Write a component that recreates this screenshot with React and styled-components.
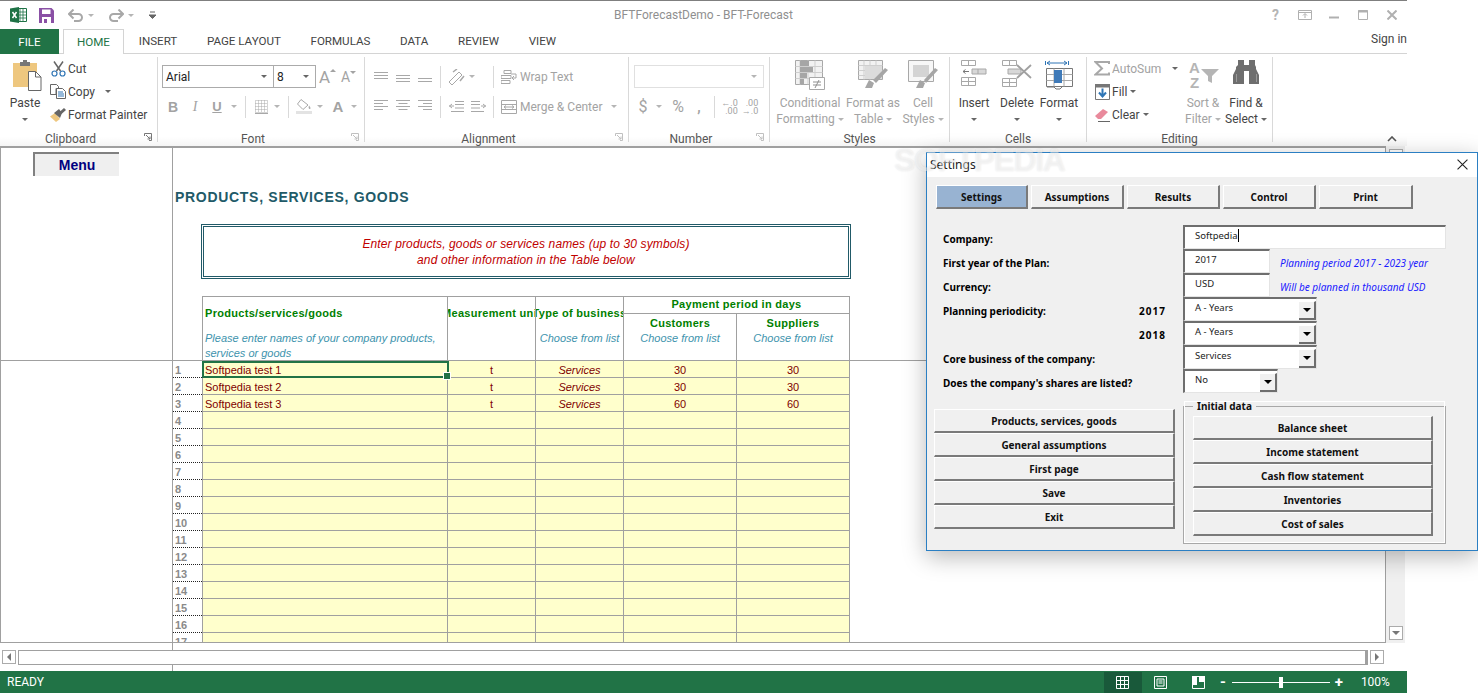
import styled, { createGlobalStyle } from "styled-components";

const GlobalStyle = createGlobalStyle`
  html, body { margin: 0; padding: 0; background: #fff; }
  * { box-sizing: border-box; }
`;

const UI = `Roboto, "Noto Sans", sans-serif`;
const ARIAL = `"Liberation Sans", Arial, sans-serif`;
const TAHOMA = `"Noto Sans", "DejaVu Sans", sans-serif`;
const LINE = "#a0a0a0";
const GREEN = "#217346";

const Page = styled.div`
  position: relative;
  width: 1478px;
  height: 693px;
  overflow: hidden;
  background: #fff;
  font-family: ${UI};
`;

const ExcelWindow = styled.div`
  width: 1407px;
  height: 693px;
  display: flex;
  flex-direction: column;
  border-top: 1px solid #7f7f7f;
`;

/* title bar */
const TitleBar = styled.div`
  height: 28px;
  flex: none;
  display: grid;
  grid-template-columns: 1fr auto 1fr;
  align-items: center;
`;
const Qat = styled.div`
  display: flex;
  align-items: center;
  padding-left: 10px;
`;
const QatSlot = styled.span`
  display: flex;
  align-items: center;
  width: ${(p) => p.$w}px;
`;
const WindowTitle = styled.div`
  font-size: 12px;
  color: #8f8f8f;
`;
const WinControls = styled.div`
  display: flex;
  justify-content: flex-end;
  align-items: center;
  padding-right: 1px;
`;
const WinBtn = styled.span`
  width: 29px;
  display: flex;
  justify-content: center;
`;

/* tabs */
const TabRow = styled.div`
  height: 25px;
  flex: none;
  display: flex;
  border-bottom: 1px solid #d4d4d4;
  font-size: 11.6px;
`;
const FileTab = styled.div`
  width: 59px;
  margin-right: 4px;
  height: 25px;
  background: ${GREEN};
  color: #fff;
  display: flex;
  align-items: center;
  justify-content: center;
`;
const Tab = styled.div`
  height: ${(p) => (p.$active ? 25 : 24)}px;
  padding: 0 ${(p) => (p.$active ? 13 : 14.8)}px;
  display: flex;
  align-items: center;
  color: ${(p) => (p.$active ? GREEN : "#444")};
  background: #fff;
  border: ${(p) => (p.$active ? "1px solid #d4d4d4" : "none")};
  border-bottom: none;
`;
const SignIn = styled.div`
  margin-left: auto;
  align-self: flex-start;
  padding-top: 3px;
  color: #444;
  font-size: 12px;
`;

/* ribbon */
const Ribbon = styled.div`
  height: 92px;
  flex: none;
  display: flex;
  padding: 3px 0 4px;
  font-size: 12px;
  color: #444;
  background: linear-gradient(#fff 90%, #f5f5f5);
`;
const Group = styled.div`
  width: ${(p) => p.$w}px;
  flex: none;
  display: flex;
  flex-direction: column;
  border-right: 1px solid #d9d9d9;
`;
const GroupBody = styled.div`
  flex: 1;
  display: flex;
  min-height: 0;
  padding-top: ${(p) => p.$top ?? 0}px;
  flex-direction: ${(p) => (p.$col ? "column" : "row")};
`;
const GroupLabel = styled.div`
  height: 15px;
  flex: none;
  margin-bottom: -4px;
  display: grid;
  grid-template-columns: 1fr auto 1fr;
  align-items: center;
  color: #555;
  font-size: 12px;
  padding-right: ${(p) => (p.$launcher ? 16 : 0)}px;
  & > span { grid-column: 2; }
  & > svg { grid-column: 3; justify-self: end; margin: -3px -11px 0 0; }
`;
const BigBtn = styled.div`
  width: ${(p) => p.$w}px;
  flex: none;
  margin-left: ${(p) => p.$ml ?? 0}px;
  display: flex;
  flex-direction: column;
  align-items: center;
  padding-top: 3px;
  line-height: 16px;
  color: ${(p) => (p.$off ? "#a3a3a3" : "#444")};
  white-space: nowrap;
`;
const BigIcon = styled.div`
  height: 35px;
  display: flex;
  align-items: flex-start;
  flex: none;
`;
const BigLine = styled.div`
  height: 16px;
  display: flex;
  align-items: center;
`;
const SmallCol = styled.div`
  display: flex;
  flex-direction: column;
  width: ${(p) => p.$w}px;
  padding-left: ${(p) => p.$pl ?? 0}px;
  flex: none;
`;
const SmallRow = styled.div`
  height: 23px;
  display: flex;
  align-items: center;
  white-space: nowrap;
  color: ${(p) => (p.$off ? "#a3a3a3" : "#444")};
`;
const SmallIcon = styled.span`
  width: 20px;
  flex: none;
  display: flex;
  justify-content: center;
`;
const Caret = styled.span`
  display: inline-block;
  width: 0;
  height: 0;
  flex: none;
  border-left: 3px solid transparent;
  border-right: 3px solid transparent;
  border-top: 3px solid ${(p) => (p.$off ? "#b5b5b5" : "#666")};
  margin-left: ${(p) => p.$ml ?? 0}px;
`;
const ToolRow = styled.div`
  height: 23px;
  display: flex;
  align-items: center;
  padding-left: ${(p) => p.$pl ?? 0}px;
  margin-bottom: 7px;
  color: #a3a3a3;
  white-space: nowrap;
`;
const Slot = styled.span`
  width: ${(p) => p.$w}px;
  flex: none;
  display: flex;
  justify-content: center;
  align-items: center;
  font: ${(p) => p.$font || "inherit"};
`;
const SizeTick = styled.span`
  align-self: flex-start;
  margin-top: 2px;
  width: 0;
  height: 0;
  border-left: 3px solid transparent;
  border-right: 3px solid transparent;
  ${(p) => (p.$up ? "border-bottom: 3px solid #a3a3a3;" : "border-top: 3px solid #a3a3a3;")}
`;
const ToolSep = styled.span`
  width: 1px;
  height: 22px;
  flex: none;
  background: #d9d9d9;
  margin: 0 ${(p) => p.$r ?? 5}px 0 ${(p) => p.$l ?? 5}px;
`;
const ToolText = styled.span`
  margin-left: 2px;
`;
const ComboBox = styled.div`
  width: ${(p) => p.$w}px;
  height: 23px;
  flex: none;
  margin-left: ${(p) => p.$ml ?? 0}px;
  display: flex;
  align-items: center;
  justify-content: space-between;
  padding: 0 6px 0 3px;
  border: 1px solid ${(p) => (p.$off ? "#e0e0e0" : "#ababab")};
  font-size: 12px;
  color: #222;
`;
const DecimalStack = styled.span`
  display: flex;
  flex-direction: column;
  font-size: 9px;
  line-height: 8px;
  text-align: right;
`;
const Collapse = styled.svg`
  align-self: flex-end;
  margin: 0 10px 0 auto;
`;

/* sheet */
const SheetRow = styled.div`
  flex: 1;
  display: flex;
  min-height: 0;
`;
const Sheet = styled.div`
  width: 1386px;
  flex: none;
  display: flex;
  flex-direction: column;
  border: 1px solid ${LINE};
  border-top-width: 2px;
  overflow: hidden;
`;
const TopPane = styled.div`
  height: 213px;
  flex: none;
  display: flex;
  border-bottom: 1px solid ${LINE};
`;
const BottomPane = styled.div`
  flex: 1;
  display: flex;
  min-height: 0;
  overflow: hidden;
`;
const SideCol = styled.div`
  width: 172px;
  flex: none;
  border-right: 1px solid ${LINE};
`;
const MenuButton = styled.div`
  width: 86px;
  height: 24px;
  margin: 4px 0 0 32px;
  background: #efefef;
  border-top: 2px solid #808080;
  border-left: 2px solid #808080;
  color: #000080;
  font: bold 14px ${ARIAL};
  display: flex;
  align-items: center;
  justify-content: center;
`;
const TopMain = styled.div`
  flex: 1;
  font-family: ${ARIAL};
  padding-top: 41px;
`;
const SheetTitle = styled.h1`
  margin: 0 0 0 2px;
  font: bold 14px/16px ${ARIAL};
  letter-spacing: 0.7px;
  color: #215a68;
`;
const NoteBox = styled.div`
  width: 650px;
  height: 55px;
  margin: 19px 0 17px 28px;
  border: 3px double #215a68;
  color: #c00000;
  font: italic 12px/16px ${ARIAL};
  letter-spacing: 0.12px;
  text-align: center;
  padding-top: 9px;
`;
const HeadGrid = styled.div`
  width: 648px;
  margin-left: 29px;
  height: 64px;
  display: grid;
  grid-template-columns: 245px 88px 88px 113px 113px;
  grid-template-rows: 17px 47px;
  border-top: 1px solid ${LINE};
  border-left: 1px solid ${LINE};
`;
const HeadCell = styled.div`
  grid-column: ${(p) => p.$col};
  grid-row: ${(p) => p.$row};
  border-right: 1px solid ${LINE};
  border-bottom: ${(p) => (p.$line ? `1px solid ${LINE}` : "none")};
  overflow: hidden;
  display: flex;
  flex-direction: column;
  align-items: ${(p) => (p.$left ? "flex-start" : "center")};
  padding-left: ${(p) => (p.$left ? 2 : 0)}px;
  padding-top: ${(p) => p.$top ?? 0}px;
`;
const HeadTitle = styled.div`
  flex: none;
  white-space: nowrap;
  font: bold 11px/14px ${ARIAL};
  letter-spacing: 0.3px;
  color: #008000;
`;
const HeadHint = styled.div`
  flex: none;
  white-space: nowrap;
  font: italic 11px/15px ${ARIAL};
  color: #3d93ad;
  margin-top: ${(p) => p.$mt ?? 0}px;
`;
const RowsGrid = styled.div`
  flex: none;
  display: grid;
  grid-template-columns: 29px 246px 88px 88px 113px 113px;
  grid-auto-rows: 17px;
  font: 11px/16px ${ARIAL};
  color: #800000;
`;
const RowNum = styled.div`
  font-weight: bold;
  color: #8a8a8a;
  padding: 1px 0 0 2px;
  border-bottom: 1px dotted #222;
`;
const Cell = styled.div`
  position: relative;
  background: #ffffcc;
  border-right: 1px solid ${LINE};
  border-bottom: 1px solid ${LINE};
  border-left: ${(p) => (p.$first ? `1px solid ${LINE}` : "none")};
  text-align: ${(p) => (p.$first ? "left" : "center")};
  font-style: ${(p) => (p.$italic ? "italic" : "normal")};
  padding: 1px 0 0 ${(p) => (p.$first ? 2 : 0)}px;
`;
const Selection = styled.span`
  position: absolute;
  z-index: 2;
  inset: 0 -2px -1px -1px;
  border: 2px solid ${GREEN};
  &::after {
    content: "";
    position: absolute;
    right: -4px;
    bottom: -4px;
    width: 6px;
    height: 6px;
    background: ${GREEN};
    border: 1px solid #fff;
  }
`;
const VScroll = styled.div`
  width: 19px;
  flex: none;
  background: #f0f0f0;
  display: flex;
  flex-direction: column;
  justify-content: space-between;
  align-items: center;
  padding: 3px 0 3px;
`;
const ScrollBtn = styled.div`
  width: 14px;
  height: 14px;
  background: #fff;
  border: 1px solid #ababab;
  display: flex;
  align-items: center;
  justify-content: center;
`;
const Tri = styled.span`
  width: 0;
  height: 0;
  border: 4px solid transparent;
  ${(p) => p.$dir === "down" && "border-top: 4px solid #777; border-bottom: 0;"}
  ${(p) => p.$dir === "up" && "border-bottom: 4px solid #777; border-top: 0;"}
  ${(p) => p.$dir === "left" && "border-right: 4px solid #777; border-left: 0;"}
  ${(p) => p.$dir === "right" && "border-left: 4px solid #777; border-right: 0;"}
`;
const HScrollRow = styled.div`
  height: 28px;
  flex: none;
  display: flex;
  align-items: center;
  gap: 2px;
  padding: 0 23px 0 2px;
  background: linear-gradient(${LINE}, ${LINE}) 172px 0 / 1px 100% no-repeat;
`;
const HTrack = styled.div`
  flex: 1;
  height: 15px;
  background: #fff;
  border: 1px solid ${LINE};
  border-right-width: 3px;
`;

/* status bar */
const StatusBar = styled.div`
  height: 22px;
  flex: none;
  background: ${GREEN};
  color: #fff;
  display: flex;
  align-items: center;
  font-size: 12px;
  padding-left: 7px;
`;
const ViewBtn = styled.div`
  width: 38px;
  height: 21px;
  margin-top: 1px;
  display: flex;
  align-items: center;
  justify-content: center;
  margin-left: ${(p) => p.$ml ?? 0}px;
  background: ${(p) => (p.$active ? "#19593a" : "transparent")};
`;
const ZoomSlider = styled.div`
  width: 98px;
  height: 1px;
  margin: 0 2px;
  background: #fff;
  display: flex;
  justify-content: center;
  align-items: center;
  &::after {
    content: "";
    width: 4px;
    height: 11px;
    background: #fff;
  }
`;
const ZoomSign = styled.span`
  width: 14px;
  text-align: center;
  font-size: 15px;
  font-weight: 700;
  line-height: 15px;
  margin-left: ${(p) => p.$ml ?? 0}px;
`;
const ZoomValue = styled.span`
  margin-left: 15px;
`;

/* settings dialog */
const Dialog = styled.div`
  position: absolute;
  left: 926px;
  top: 152px;
  width: 552px;
  height: 399px;
  background: #f0f0f0;
  border: 1px solid #2b7fc3;
  box-shadow: 0 6px 22px rgba(0, 0, 0, 0.28);
  font-family: ${TAHOMA};
  color: #000;
`;
const DialogTitle = styled.div`
  height: 24px;
  background: #fff;
  display: flex;
  align-items: center;
  justify-content: space-between;
  padding: 0 9px 2px 3px;
  font-size: 12px;
  color: #222;
`;
const DialogBody = styled.div`
  padding: 8px 0 0 7px;
`;
const DialogTabs = styled.div`
  display: flex;
  gap: 3px;
  margin-left: 2px;
`;
const Raised = styled.div`
  height: 24px;
  width: ${(p) => p.$w ?? "auto"};
  flex: none;
  background: ${(p) => (p.$active ? "#98b3d2" : "#f0f0f0")};
  border-top: 1px solid #fff;
  border-left: 1px solid #fff;
  border-right: 2px solid #7a7a7a;
  border-bottom: 2px solid #7a7a7a;
  display: flex;
  align-items: center;
  justify-content: center;
  font-size: 10px;
  font-weight: 700;
  color: #111;
`;
const Form = styled.div`
  margin: 16px 0 0 9px;
`;
const FormRow = styled.div`
  height: 24px;
  display: flex;
  font-size: 10px;
  line-height: 12px;
`;
const FormLabel = styled.div`
  width: 223px;
  flex: none;
  margin-right: 17px;
  display: flex;
  justify-content: space-between;
  align-items: center;
  font-weight: 700;
  padding-top: 3px;
`;
const YearMark = styled.span`
  letter-spacing: 1px;
  margin-left: auto;
`;
const Sunken = styled.div`
  width: ${(p) => p.$w}px;
  height: 24px;
  flex: none;
  background: #fff;
  border-top: 2px solid #6e6e6e;
  border-left: 2px solid #6e6e6e;
  border-right: 1px solid #e4e4e4;
  border-bottom: 1px solid #e4e4e4;
  display: flex;
  justify-content: space-between;
  padding-left: 10px;
  padding-top: 2px;
  font-size: 9.5px;
  line-height: 13px;
  color: #222;
`;
const Cursor = styled.span`
  display: inline-block;
  width: 1px;
  height: 13px;
  background: #000;
  margin-left: 1px;
  vertical-align: top;
`;
const ComboArrow = styled.span`
  width: 17px;
  height: 19px;
  flex: none;
  background: #f0f0f0;
  border-top: 1px solid #fff;
  border-right: 2px solid #6e6e6e;
  border-bottom: 2px solid #6e6e6e;
  display: flex;
  align-items: center;
  justify-content: center;
  &::after {
    content: "";
    border-left: 4px solid transparent;
    border-right: 4px solid transparent;
    border-top: 4px solid #000;
  }
`;
const FormNote = styled.div`
  margin-left: 10px;
  padding-top: 8px;
  font-size: 10px;
  font-style: italic;
  color: #1a1aff;
  white-space: nowrap;
`;
const LowerRow = styled.div`
  display: flex;
  margin-top: 7px;
`;
const ActionCol = styled.div`
  width: 241px;
  flex: none;
  padding-top: 9px;
  display: flex;
  flex-direction: column;
`;
const InitialData = styled.fieldset`
  width: 263px;
  height: 144px;
  margin: 0 0 0 8px;
  padding: 4px 12px 0 9px;
  border: 1px solid #a8a8a8;
  outline: 1px solid #fff;
  outline-offset: -2px;
  display: flex;
  flex-direction: column;
  min-width: 0;
  legend {
    padding: 0 4px;
    font-size: 10px;
    font-weight: 700;
    line-height: 12px;
    color: #111;
  }
`;
const Watermark = styled.div`
  position: absolute;
  left: 894px;
  top: 147px;
  font: bold 32px/26px ${ARIAL};
  letter-spacing: -1.4px;
  color: rgba(255, 255, 255, 0.45);
  text-shadow: 0 0 2px rgba(0, 0, 0, 0.1);
  pointer-events: none;
`;

/* icons */
const I = "#a8a8a8";
const ExcelLogo = () => (
  <svg width="17" height="16" viewBox="0 0 17 16">
    <path d="M7 1.500h9.500v13H7z" fill="#fff" stroke="#1f7246" />
    <path d="M10 2v12M13 2v12M7 5h9M7 8h9M7 11h9" stroke="#1f7246" strokeWidth=".8" />
    <path d="M0 1.500 9 0v16L0 14.500z" fill="#1f7246" />
    <path d="M2.500 5 6.500 11M6.500 5 2.500 11" stroke="#fff" strokeWidth="1.500" />
  </svg>
);
const SaveIcon = () => (
  <svg width="15" height="15" viewBox="0 0 15 15">
    <path d="M0 0h12.500L15 2.500V15H0z" fill="#8a50a5" />
    <path d="M3 1.500h8.500v4.500H3z" fill="#fff" />
    <path d="M3 9h9v6H3z" fill="#fff" />
    <path d="M5 11h3v4H5z" fill="#8a50a5" />
  </svg>
);
const UndoIcon = ({ flip }) => (
  <svg width="16" height="13" viewBox="0 0 16 13" style={flip ? { transform: "scaleX(-1)" } : undefined}>
    <path d="M1 5h9.500a3.500 3.500 0 0 1 0 7H6" fill="none" stroke={I} strokeWidth="2" />
    <path d="M5.500 0.500 1 5l4.500 4.500" fill="none" stroke={I} strokeWidth="2" />
  </svg>
);
const QatMore = () => (
  <svg width="7" height="8" viewBox="0 0 7 8">
    <path d="M1 1h5M0 4h7l-3.500 3.500z" stroke="#666" fill="#666" strokeWidth="1" />
  </svg>
);
const Launcher = ({ c = "#777" }) => (
  <svg width="8" height="8" viewBox="0 0 8 8">
    <path d="M.5 3V.5H7.500V7.500H5" fill="none" stroke={c} />
    <path d="M2 2 6 6M6 3.500V6H3.500" fill="none" stroke={c} />
  </svg>
);
const HelpIcon = () => (
  <span style={{ color: "#b5b5b5", fontWeight: 700, fontSize: 14, lineHeight: "14px" }}>?</span>
);
const RestoreIcon = () => (
  <svg width="14" height="10" viewBox="0 0 14 10">
    <path d="M.5.500h13v9H.500zM.5 2.500h13" fill="none" stroke="#b0b0b0" />
    <path d="M7 8V4M5 5.500 7 3.500l2 2" fill="none" stroke="#b0b0b0" />
  </svg>
);
const MinIcon = () => (
  <svg width="10" height="10" viewBox="0 0 10 10"><path d="M0 7.500h10" stroke="#b0b0b0" strokeWidth="2" /></svg>
);
const MaxIcon = () => (
  <svg width="10" height="10" viewBox="0 0 10 10">
    <path d="M.5.500h9v9h-9z" fill="none" stroke="#b0b0b0" />
    <path d="M0 1.500h10" stroke="#b0b0b0" strokeWidth="2" />
  </svg>
);
const CloseIcon = ({ c = "#b0b0b0", w = 2, s = 10 }) => (
  <svg width={s} height={s} viewBox="0 0 10 10">
    <path d="M.5.500l9 9M9.500.500l-9 9" stroke={c} strokeWidth={w} />
  </svg>
);
const PasteIcon = () => (
  <svg width="29" height="31" viewBox="0 0 29 31" style={{ marginLeft: 4 }}>
    <path d="M0 3h24v24H0z" fill="#eec77f" />
    <path d="M7 2h3V0h4v2h3v4H7z" fill="#777" />
    <path d="M15.500 11.500h7l5.500 5.500v13.500H15.500z" fill="#fff" stroke="#666" />
    <path d="M22.500 11.500V17H28" fill="none" stroke="#666" />
  </svg>
);
const CutIcon = () => (
  <svg width="15" height="16" viewBox="0 0 15 16">
    <path d="M3 .500 9.500 10M12 .500 5.500 10" stroke="#666" strokeWidth="1.500" />
    <circle cx="3.500" cy="12.500" r="2.500" fill="none" stroke="#2f75b5" strokeWidth="1.200" />
    <circle cx="11.500" cy="12.500" r="2.500" fill="none" stroke="#2f75b5" strokeWidth="1.200" />
  </svg>
);
const CopyIcon = () => (
  <svg width="16" height="15" viewBox="0 0 16 15">
    <path d="M.5.500h6l2 2v2H6v6H.500z" fill="#fff" stroke="#666" />
    <path d="M6.500 4.500h6l3 3v7h-9z" fill="#fff" stroke="#666" />
    <path d="M8 8h5M8 10h6M8 12h6" stroke="#2f75b5" />
  </svg>
);
const PainterIcon = () => (
  <svg width="16" height="14" viewBox="0 0 16 14">
    <path d="M0 8.500 5 5l5 6-4 3z" fill="#eec77f" />
    <path d="M4 5 9 1l3 4-2 5z" fill="#666" />
    <path d="M9.500 4 14 0l2 2-4.500 4z" fill="#666" />
  </svg>
);
const LinesIcon = ({ widths = [14, 14, 14], anchor = "left", top = 0, gap = 3, h = 14 }) => (
  <svg width="14" height={h} viewBox={`0 0 14 ${h}`}>
    {widths.map((w, i) => (
      <path
        key={i}
        d={`M${anchor === "left" ? 0 : anchor === "right" ? 14 - w : (14 - w) / 2} ${top + i * gap + 0.5}h${w}`}
        stroke={I}
      />
    ))}
  </svg>
);
const OrientIcon = () => (
  <svg width="18" height="16" viewBox="0 0 18 16">
    <path d="M2 13 12 3l3 3L5 16z" fill="none" stroke={I} />
    <path d="M6 3l4-3M13 12l4-5" stroke={I} strokeWidth="1.500" />
  </svg>
);
const IndentIcon = ({ flip }) => (
  <svg width="15" height="11" viewBox="0 0 15 11" style={flip ? { transform: "scaleX(-1)" } : undefined}>
    <path d="M6 .500h9M6 3.500h9M6 7h9M2 10.500h13" stroke={I} />
    <path d="M5 5H0M3 3 .5 5 3 7" fill="none" stroke={I} />
  </svg>
);
const WrapIcon = () => (
  <svg width="16" height="14" viewBox="0 0 16 14">
    <path d="M3 .5h7v3H3zM0 5.500h10v3H0zM0 10.500h9v3H0z" fill="none" stroke={I} />
    <path d="M10 4h5v4h-4M13 6l-2 2 2 2" fill="none" stroke={I} />
  </svg>
);
const MergeIcon = () => (
  <svg width="16" height="14" viewBox="0 0 16 14">
    <path d="M.5.500h15v13H.500zM.5 4.500h15M.5 9.500h15" fill="none" stroke={I} />
    <path d="M3 7h10M5 5.500 3 7l2 1.500M11 5.500 13 7l-2 1.500" fill="none" stroke={I} />
  </svg>
);
const BorderIcon = () => (
  <svg width="13" height="14" viewBox="0 0 13 14">
    <path d="M.5.500h12v12H.500zM3.500.500v12M6.500.500v12M9.500.500v12M.5 3.500h12M.5 6.500h12M.5 9.500h12" fill="none" stroke={I} strokeDasharray="1 1" />
    <path d="M0 13.500h13" stroke={I} />
  </svg>
);
const FillIcon = () => (
  <svg width="16" height="15" viewBox="0 0 16 15">
    <path d="M5 .5 12 6 7 10.500 1.500 5z" fill="#fff" stroke={I} />
    <path d="M13 6.500c1.500 2 2 3 1 3.500s-2-1-1-3.500z" fill={I} />
    <path d="M0 12h16v3H0z" fill="#e3e3e3" />
  </svg>
);
const CondIcon = () => (
  <svg width="30" height="30" viewBox="0 0 30 30">
    <path d="M.5.500h27v24H.500z" fill="#f2f2f2" stroke={I} />
    <path d="M5 .5v24M13 .5v24M20 .5v24M.5 6.500h27M.5 12.500h27M.5 18.500h27" stroke="#cfcfcf" />
    <path d="M5 1h9v5H5zM5 7h13v5H5zM5 13h7v5H5zM5 19h4v5H5z" fill="#a6a6a6" />
    <path d="M14.500 17.500h15v12h-15z" fill="#fff" stroke={I} />
    <path d="M18 22h8M18 25h8M24 20l-4 8" stroke="#8f8f8f" />
  </svg>
);
const TableIcon = () => (
  <svg width="30" height="28" viewBox="0 0 30 28">
    <path d="M.5.500h24v19H.500z" fill="#f2f2f2" stroke={I} />
    <path d="M6 .5v19M12 .5v19M18 .5v19M.5 5.500h24M.5 10.500h24M.5 15.500h24" stroke="#cfcfcf" />
    <path d="M7 6h17v13H7z" fill="#dcdcdc" />
    <path d="M7 28l4-8 5 3-2 5zM15 20 27 8l3 2-12 13z" fill="#a6a6a6" />
  </svg>
);
const CellStyleIcon = () => (
  <svg width="30" height="28" viewBox="0 0 30 28">
    <path d="M.5.500h25v21H.500z" fill="#f7f7f7" stroke={I} />
    <path d="M5 5h16v12H5z" fill="#d4d4d4" />
    <path d="M8 28l4-8 5 3-2 5zM16 20 27 8l3 2-12 13z" fill="#a6a6a6" />
  </svg>
);
const InsertIcon = () => (
  <svg width="26" height="26" viewBox="0 0 26 26">
    <path d="M.5.500h14v5H.500zM7.500.500v5M.5 17.500h14v8H.500zM.5 21.500h14M7.500 17.500v8" fill="none" stroke={I} />
    <path d="M11 9h14v5H11zM17 9v5" fill="#d8d8d8" stroke={I} />
    <path d="M2 11.500h6M4.500 9.500 2 11.500l2.500 2" fill="none" stroke="#777" />
  </svg>
);
const DeleteIcon = () => (
  <svg width="30" height="27" viewBox="0 0 30 27">
    <path d="M.5.500h14v5H.500zM7.500.500v5M.5 18.500h14v8H.500zM.5 22.500h14M7.500 18.500v8" fill="none" stroke={I} />
    <path d="M6 9h13v5H6z" fill="#d8d8d8" stroke={I} />
    <path d="M15 5l14 13M29 5 15 18" stroke="#a0a0a0" strokeWidth="1.800" />
  </svg>
);
const FormatIcon = () => (
  <svg width="28" height="30" viewBox="0 0 28 30">
    <path d="M.5 1v4M23.500 1v4M2 3h20M5 1 2 3l3 2M19 1l3 2-3 2" fill="none" stroke="#2f75b5" />
    <path d="M1.500 8.500h26v18h-26z" fill="#fff" stroke="#777" />
    <path d="M9 8.500v18M19 8.500v18M1.500 14.500h26M1.500 20.500h26" stroke="#a8a8a8" />
    <path d="M9 10h8v13H9z" fill="#3f7ab8" />
    <path d="M2 27h7l2 2h4l2-2" fill="none" stroke="#777" />
  </svg>
);
const SigmaIcon = () => (
  <svg width="16" height="15" viewBox="0 0 16 15">
    <path d="M15 3V1H1.500L8 7.500 1.500 13.500H15v-2" fill="none" stroke={I} strokeWidth="2" />
  </svg>
);
const FillDownIcon = () => (
  <svg width="15" height="16" viewBox="0 0 15 16">
    <path d="M.5 3h14v12.500H.500z" fill="#fff" stroke="#777" />
    <path d="M0 0h15v3H0z" fill="#777" />
    <path d="M7.500 4.500v7M4 8.500l3.500 4 3.500-4" fill="none" stroke="#2f75b5" strokeWidth="2" />
  </svg>
);
const EraserIcon = () => (
  <svg width="15" height="14" viewBox="0 0 15 14">
    <path d="M0 8 8 1l5 3-7 7H3z" fill="#e98a9c" />
    <path d="M3 13.500h12" stroke="#666" />
  </svg>
);
const SortGlyph = () => (
  <svg width="31" height="29" viewBox="0 0 31 29">
    <text x="1" y="13" fontFamily={ARIAL} fontWeight="700" fontSize="15" fill="#b5b5b5">A</text>
    <text x="2" y="28" fontFamily={ARIAL} fontWeight="700" fontSize="15" fill="#b5b5b5">Z</text>
    <path d="M13 9h18l-7 7v7l-4-2v-5z" fill="#b5b5b5" />
  </svg>
);
const BinocularIcon = () => (
  <svg width="27" height="24" viewBox="0 0 27 24">
    <path d="M5 0h6v5h5V0h6v5l1 2v2l3 6v9H16V11h-5v13H0v-9l3-6V7l2-2z" fill="#6e6e6e" />
    <path d="M3.500 14v8M23.500 14v8" stroke="#9a9a9a" />
  </svg>
);
const SheetGridIcon = () => (
  <svg width="13" height="13" viewBox="0 0 13 13">
    <path d="M.5.500h12v12H.500zM4.500.500v12M8.500.500v12M.5 4.500h12M.5 8.500h12" fill="none" stroke="#fff" />
  </svg>
);
const PageIcon = () => (
  <svg width="13" height="13" viewBox="0 0 13 13">
    <path d="M.5.500h12v12H.500z" fill="none" stroke="#fff" />
    <path d="M3 3h7v7H3z" fill="none" stroke="#fff" />
    <path d="M4.500 5h4M4.500 7h4" stroke="#fff" />
  </svg>
);
const BreakIcon = () => (
  <svg width="13" height="13" viewBox="0 0 13 13">
    <path d="M.5.500h12v12H.500z" fill="none" stroke="#fff" />
    <path d="M0 0h5v9H0zM7 0h6v6H7z" fill="#fff" />
  </svg>
);

const tabs = ["INSERT", "PAGE LAYOUT", "FORMULAS", "DATA", "REVIEW", "VIEW"];
const products = [
  ["Softpedia test 1", "t", "Services", "30", "30"],
  ["Softpedia test 2", "t", "Services", "30", "30"],
  ["Softpedia test 3", "t", "Services", "60", "60"],
];
const rowNumbers = Array.from({ length: 17 }, (_, i) => i + 1);
const dialogTabs = ["Settings", "Assumptions", "Results", "Control", "Print"];
const actions = ["Products, services, goods", "General assumptions", "First page", "Save", "Exit"];
const initialData = ["Balance sheet", "Income statement", "Cash flow statement", "Inventories", "Cost of sales"];

const Big = ({ icon, lines, w, off, caretOnly, ml }) => (
  <BigBtn $w={w} $off={off} $ml={ml}>
    <BigIcon>{icon}</BigIcon>
    {lines.map((l, i) => (
      <BigLine key={l}>
        {l}
        {!caretOnly && i === lines.length - 1 && <Caret $ml={3} $off={off} />}
      </BigLine>
    ))}
    {caretOnly && (
      <BigLine>
        <Caret />
      </BigLine>
    )}
  </BigBtn>
);

const App = () => (
  <Page>
    <GlobalStyle />
    <ExcelWindow>
      <TitleBar>
        <Qat>
          <QatSlot $w={29}><ExcelLogo /></QatSlot>
          <QatSlot $w={29}><SaveIcon /></QatSlot>
          <QatSlot $w={20}><UndoIcon /></QatSlot>
          <QatSlot $w={20}><Caret $off /></QatSlot>
          <QatSlot $w={20}><UndoIcon flip /></QatSlot>
          <QatSlot $w={21}><Caret $off /></QatSlot>
          <QatSlot $w={10}><QatMore /></QatSlot>
        </Qat>
        <WindowTitle>BFTForecastDemo - BFT-Forecast</WindowTitle>
        <WinControls>
          <WinBtn><HelpIcon /></WinBtn>
          <WinBtn><RestoreIcon /></WinBtn>
          <WinBtn><MinIcon /></WinBtn>
          <WinBtn><MaxIcon /></WinBtn>
          <WinBtn><CloseIcon /></WinBtn>
        </WinControls>
      </TitleBar>

      <TabRow>
        <FileTab>FILE</FileTab>
        <Tab $active>HOME</Tab>
        {tabs.map((t) => (
          <Tab key={t}>{t}</Tab>
        ))}
        <SignIn>Sign in</SignIn>
      </TabRow>

      <Ribbon>
        <Group $w={158}>
          <GroupBody>
            <Big icon={<PasteIcon />} lines={["Paste"]} w={36} ml={7} caretOnly />
            <SmallCol $w={115} $pl={5}>
              <SmallRow><SmallIcon><CutIcon /></SmallIcon>Cut</SmallRow>
              <SmallRow><SmallIcon><CopyIcon /></SmallIcon>Copy<Caret $ml={10} /></SmallRow>
              <SmallRow><SmallIcon><PainterIcon /></SmallIcon>Format Painter</SmallRow>
            </SmallCol>
          </GroupBody>
          <GroupLabel $launcher><span>Clipboard</span><Launcher /></GroupLabel>
        </Group>

        <Group $w={207}>
          <GroupBody $col $top={8}>
            <ToolRow $pl={4}>
              <ComboBox $w={112}>Arial<Caret /></ComboBox>
              <ComboBox $w={43} $ml={-1}>8<Caret /></ComboBox>
              <Slot $w={23} $font={`17px ${UI}`}>A<SizeTick $up /></Slot>
              <Slot $w={19} $font={`14px ${UI}`}>A<SizeTick /></Slot>
            </ToolRow>
            <ToolRow $pl={4}>
              <Slot $w={22} $font={`bold 14px ${ARIAL}`}>B</Slot>
              <Slot $w={22} $font={`italic 14px "Liberation Serif", serif`}>I</Slot>
              <Slot $w={22} $font={`bold 13px ${ARIAL}`}><u>U</u></Slot>
              <Slot $w={12}><Caret $off /></Slot>
              <ToolSep />
              <Slot $w={20}><BorderIcon /></Slot>
              <Slot $w={12}><Caret $off /></Slot>
              <ToolSep />
              <Slot $w={20}><FillIcon /></Slot>
              <Slot $w={12}><Caret $off /></Slot>
              <Slot $w={24} $font={`bold 15px ${ARIAL}`}>A</Slot>
              <Slot $w={8}><Caret $off /></Slot>
            </ToolRow>
          </GroupBody>
          <GroupLabel $launcher><span>Font</span><Launcher c="#c0c0c0" /></GroupLabel>
        </Group>

        <Group $w={264}>
          <GroupBody $col $top={8}>
            <ToolRow $pl={5}>
              <Slot $w={22}><LinesIcon top={2} /></Slot>
              <Slot $w={22}><LinesIcon top={5} /></Slot>
              <Slot $w={22}><LinesIcon top={8} /></Slot>
              <ToolSep $l={4} $r={4} />
              <Slot $w={22}><OrientIcon /></Slot>
              <Slot $w={10}><Caret $off /></Slot>
              <ToolSep $l={16} $r={6} />
              <Slot $w={18}><WrapIcon /></Slot>
              <ToolText>Wrap Text</ToolText>
            </ToolRow>
            <ToolRow $pl={5}>
              <Slot $w={22}><LinesIcon widths={[14, 9, 14, 9]} /></Slot>
              <Slot $w={22}><LinesIcon widths={[14, 9, 14, 9]} anchor="center" /></Slot>
              <Slot $w={22}><LinesIcon widths={[14, 9, 14, 9]} anchor="right" /></Slot>
              <ToolSep $l={4} $r={4} />
              <Slot $w={22}><IndentIcon /></Slot>
              <Slot $w={22}><IndentIcon flip /></Slot>
              <ToolSep $l={4} $r={6} />
              <Slot $w={18}><MergeIcon /></Slot>
              <ToolText>Merge &amp; Center</ToolText>
              <Caret $ml={9} $off />
            </ToolRow>
          </GroupBody>
          <GroupLabel $launcher><span>Alignment</span><Launcher c="#c0c0c0" /></GroupLabel>
        </Group>

        <Group $w={141}>
          <GroupBody $col $top={8}>
            <ToolRow $pl={5}>
              <ComboBox $w={130} $off>&nbsp;<Caret $off /></ComboBox>
            </ToolRow>
            <ToolRow $pl={6}>
              <Slot $w={16} $font={`16px ${UI}`}>$</Slot>
              <Slot $w={16}><Caret $off /></Slot>
              <Slot $w={22} $font={`16px ${UI}`}>%</Slot>
              <Slot $w={20} $font={`bold 14px ${UI}`}>,</Slot>
              <ToolSep />
              <Slot $w={19}><DecimalStack><span>←.0</span><span>.00</span></DecimalStack></Slot>
              <Slot $w={22}><DecimalStack><span>.00</span><span>→.0</span></DecimalStack></Slot>
            </ToolRow>
          </GroupBody>
          <GroupLabel $launcher><span>Number</span><Launcher c="#c0c0c0" /></GroupLabel>
        </Group>

        <Group $w={180}>
          <GroupBody>
            <Big off icon={<CondIcon />} lines={["Conditional", "Formatting"]} w={80} />
            <Big off icon={<TableIcon />} lines={["Format as", "Table"]} w={46} />
            <Big off icon={<CellStyleIcon />} lines={["Cell", "Styles"]} w={54} />
          </GroupBody>
          <GroupLabel><span>Styles</span></GroupLabel>
        </Group>

        <Group $w={137}>
          <GroupBody>
            <Big icon={<InsertIcon />} lines={["Insert"]} w={48} caretOnly />
            <Big icon={<DeleteIcon />} lines={["Delete"]} w={38} caretOnly />
            <Big icon={<FormatIcon />} lines={["Format"]} w={46} caretOnly />
          </GroupBody>
          <GroupLabel><span>Cells</span></GroupLabel>
        </Group>

        <Group $w={186}>
          <GroupBody>
            <SmallCol $w={94} $pl={5}>
              <SmallRow $off><SmallIcon><SigmaIcon /></SmallIcon>AutoSum<Caret $ml={11} /></SmallRow>
              <SmallRow><SmallIcon><FillDownIcon /></SmallIcon>Fill<Caret $ml={3} /></SmallRow>
              <SmallRow><SmallIcon><EraserIcon /></SmallIcon>Clear<Caret $ml={3} /></SmallRow>
            </SmallCol>
            <Big off icon={<SortGlyph />} lines={["Sort &", "Filter"]} w={44} />
            <Big icon={<BinocularIcon />} lines={["Find &", "Select"]} w={42} />
          </GroupBody>
          <GroupLabel><span>Editing</span></GroupLabel>
        </Group>

        <Collapse width="10" height="6" viewBox="0 0 10 6">
          <path d="M1 5l4-4 4 4" fill="none" stroke="#555" strokeWidth="1.600" />
        </Collapse>
      </Ribbon>

      <SheetRow>
        <Sheet>
          <TopPane>
            <SideCol>
              <MenuButton>Menu</MenuButton>
            </SideCol>
            <TopMain>
              <SheetTitle>PRODUCTS, SERVICES, GOODS</SheetTitle>
              <NoteBox>
                Enter products, goods or services names (up to 30 symbols)
                <br />
                and other information in the Table below
              </NoteBox>
              <HeadGrid>
                <HeadCell $col="1" $row="1 / 3" $left $top={9}>
                  <HeadTitle>Products/services/goods</HeadTitle>
                  <HeadHint $mt={11}>Please enter names of your company products,</HeadHint>
                  <HeadHint>services or goods</HeadHint>
                </HeadCell>
                <HeadCell $col="2" $row="1 / 3" $top={9}>
                  <HeadTitle>Measurement unit</HeadTitle>
                </HeadCell>
                <HeadCell $col="3" $row="1 / 3" $top={9}>
                  <HeadTitle>Type of business</HeadTitle>
                  <HeadHint $mt={11}>Choose from list</HeadHint>
                </HeadCell>
                <HeadCell $col="4 / 6" $row="1" $line>
                  <HeadTitle>Payment period in days</HeadTitle>
                </HeadCell>
                <HeadCell $col="4" $row="2" $top={2}>
                  <HeadTitle>Customers</HeadTitle>
                  <HeadHint $mt={1}>Choose from list</HeadHint>
                </HeadCell>
                <HeadCell $col="5" $row="2" $top={2}>
                  <HeadTitle>Suppliers</HeadTitle>
                  <HeadHint $mt={1}>Choose from list</HeadHint>
                </HeadCell>
              </HeadGrid>
            </TopMain>
          </TopPane>
          <BottomPane>
            <SideCol />
            <RowsGrid>
              {rowNumbers.map((n) => {
                const row = products[n - 1] || ["", "", "", "", ""];
                return [
                  <RowNum key={`n${n}`}>{n}</RowNum>,
                  <Cell key={`a${n}`} $first>
                    {row[0]}
                    {n === 1 && <Selection />}
                  </Cell>,
                  <Cell key={`b${n}`}>{row[1]}</Cell>,
                  <Cell key={`c${n}`} $italic>{row[2]}</Cell>,
                  <Cell key={`d${n}`}>{row[3]}</Cell>,
                  <Cell key={`e${n}`}>{row[4]}</Cell>,
                ];
              })}
            </RowsGrid>
          </BottomPane>
        </Sheet>
        <VScroll>
          <ScrollBtn><Tri $dir="up" /></ScrollBtn>
          <ScrollBtn><Tri $dir="down" /></ScrollBtn>
        </VScroll>
      </SheetRow>

      <HScrollRow>
        <ScrollBtn><Tri $dir="left" /></ScrollBtn>
        <HTrack />
        <ScrollBtn><Tri $dir="right" /></ScrollBtn>
      </HScrollRow>

      <StatusBar>
        READY
        <ViewBtn $active $ml={1060}><SheetGridIcon /></ViewBtn>
        <ViewBtn><PageIcon /></ViewBtn>
        <ViewBtn><BreakIcon /></ViewBtn>
        <ZoomSign $ml={-2}>-</ZoomSign>
        <ZoomSlider />
        <ZoomSign>+</ZoomSign>
        <ZoomValue>100%</ZoomValue>
      </StatusBar>
    </ExcelWindow>

    <Dialog>
      <DialogTitle>
        Settings
        <CloseIcon c="#222" w={1} s={11} />
      </DialogTitle>
      <DialogBody>
        <DialogTabs>
          {dialogTabs.map((t, i) => (
            <Raised key={t} $w={i === 0 ? "92px" : i === 4 ? "94px" : "93px"} $active={i === 0}>
              {t}
            </Raised>
          ))}
        </DialogTabs>
        <Form>
          <FormRow>
            <FormLabel>Company:</FormLabel>
            <Sunken $w={263}><span>Softpedia<Cursor /></span></Sunken>
          </FormRow>
          <FormRow>
            <FormLabel>First year of the Plan:</FormLabel>
            <Sunken $w={87}>2017</Sunken>
            <FormNote>Planning period 2017 - 2023 year</FormNote>
          </FormRow>
          <FormRow>
            <FormLabel>Currency:</FormLabel>
            <Sunken $w={87}>USD</Sunken>
            <FormNote>Will be planned in thousand USD</FormNote>
          </FormRow>
          <FormRow>
            <FormLabel>Planning periodicity:<YearMark>2017</YearMark></FormLabel>
            <Sunken $w={134}>A - Years<ComboArrow /></Sunken>
          </FormRow>
          <FormRow>
            <FormLabel><YearMark>2018</YearMark></FormLabel>
            <Sunken $w={134}>A - Years<ComboArrow /></Sunken>
          </FormRow>
          <FormRow>
            <FormLabel>Core business of the company:</FormLabel>
            <Sunken $w={134}>Services<ComboArrow /></Sunken>
          </FormRow>
          <FormRow>
            <FormLabel>Does the company's shares are listed?</FormLabel>
            <Sunken $w={95}>No<ComboArrow /></Sunken>
          </FormRow>
        </Form>
        <LowerRow>
          <ActionCol>
            {actions.map((a) => (
              <Raised key={a}>{a}</Raised>
            ))}
          </ActionCol>
          <InitialData>
            <legend>Initial data</legend>
            {initialData.map((a) => (
              <Raised key={a}>{a}</Raised>
            ))}
          </InitialData>
        </LowerRow>
      </DialogBody>
    </Dialog>

    <Watermark>SOFTPEDIA</Watermark>
  </Page>
);

export default App;
